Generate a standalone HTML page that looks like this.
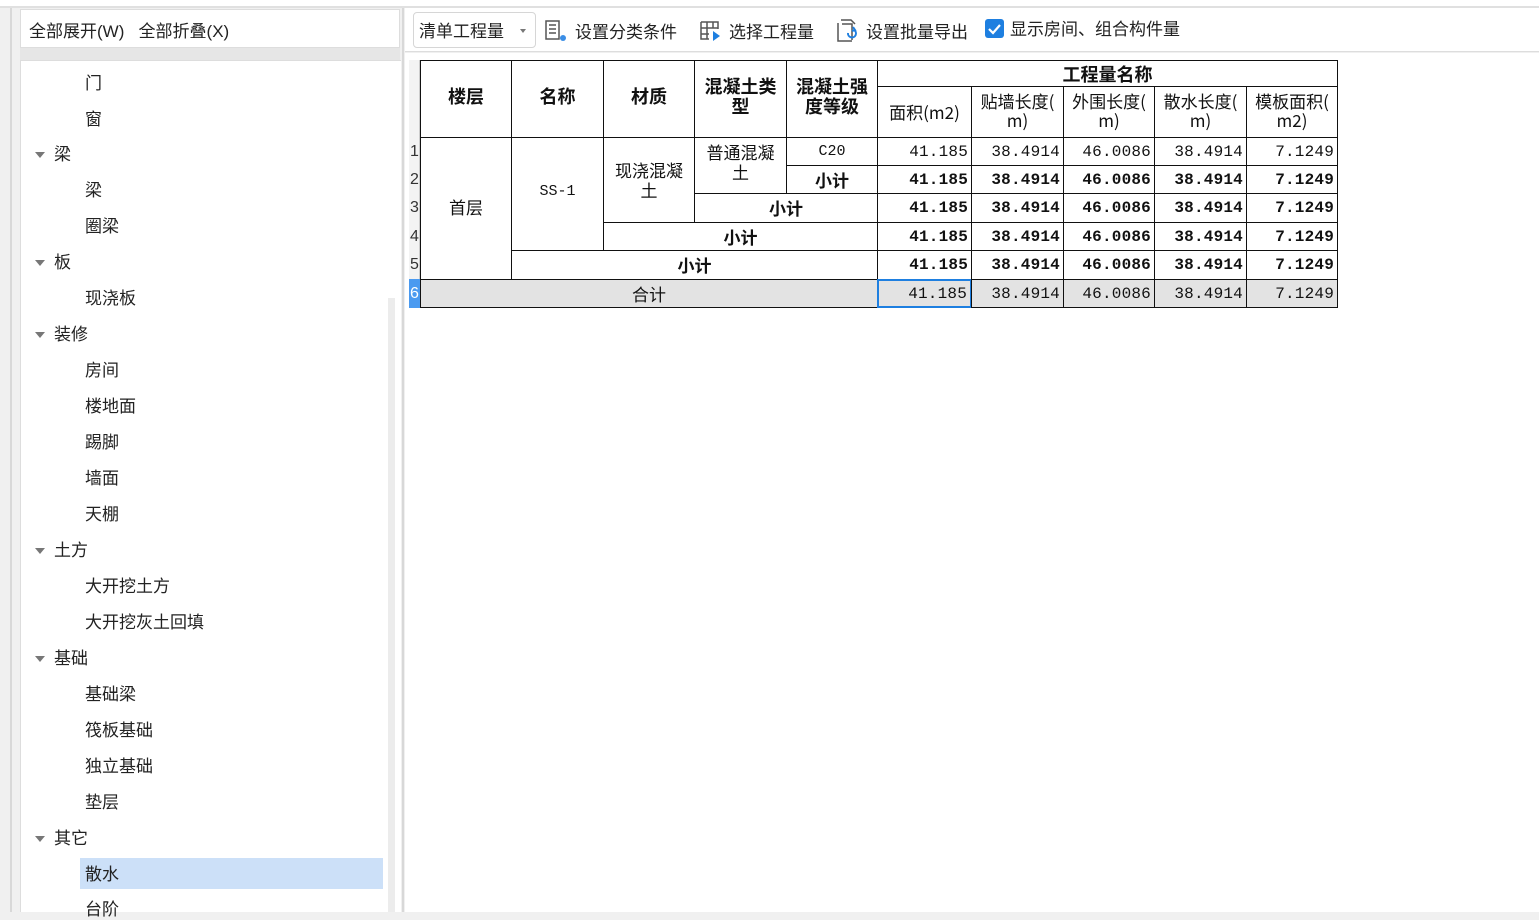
<!DOCTYPE html>
<html><head><meta charset="utf-8"><style>
*{margin:0;padding:0;box-sizing:border-box}
body{width:1539px;height:912px;background:#f0f0f0;position:relative;overflow:hidden;font-family:"Liberation Sans","Noto Sans CJK SC",sans-serif;color:#222}
.a{position:absolute}
.t{font-size:17px;position:absolute;line-height:20px;margin-top:2px}
.arr{position:absolute;width:0;height:0;border-left:5px solid transparent;border-right:5px solid transparent;border-top:6px solid #777;margin-top:2px}
.c{position:absolute;border:1px solid #111;display:flex;align-items:center;justify-content:center;text-align:center;font-family:"Noto Serif CJK SC","Liberation Serif",serif;font-size:16px;line-height:18px;background:#fff;color:#111}
.b{font-weight:bold;font-family:"Noto Sans CJK SC",sans-serif}
.h{font-family:"Noto Sans CJK SC","Liberation Sans",sans-serif}
.n{justify-content:flex-end;padding-right:3px;font-family:"Liberation Mono",monospace;font-size:16px;letter-spacing:0.2px}
.nb{font-weight:bold}
.g{background:#e3e3e3}
.rn{position:absolute;left:410px;width:10px;font-size:16px;color:#333;font-family:"Liberation Sans",sans-serif}
</style></head><body>
<div class="a" style="left:0;top:0;width:1539px;height:6px;background:#fff"></div>
<div class="a" style="left:0;top:6px;width:1539px;height:2px;background:#e0e0e0"></div>
<div class="a" style="left:10px;top:8px;width:2px;height:904px;background:#d8d8d8"></div>
<div class="a" style="left:20px;top:9px;width:380px;height:39px;background:#fff;border:1px solid #ddd"></div>
<div class="t" style="left:29px;top:20px">全部展开(W)&nbsp;&nbsp;&nbsp;全部折叠(X)</div>
<div class="a" style="left:20px;top:48px;width:380px;height:12px;background:#e6e6e6"></div>
<div class="a" style="left:20px;top:60px;width:381px;height:852px;background:#fff;border-left:1px solid #ddd;border-top:1px solid #ddd"></div>
<div class="a" style="left:388px;top:298px;width:7px;height:614px;background:#ececec"></div>
<div class="a" style="left:80px;top:858px;width:303px;height:31px;background:#cce0f8"></div>
<div class="t" style="left:85px;top:72px">门</div>
<div class="t" style="left:85px;top:108px">窗</div>
<div class="arr" style="left:35px;top:150px"></div><div class="t" style="left:54px;top:143px">梁</div>
<div class="t" style="left:85px;top:179px">梁</div>
<div class="t" style="left:85px;top:215px">圈梁</div>
<div class="arr" style="left:35px;top:258px"></div><div class="t" style="left:54px;top:251px">板</div>
<div class="t" style="left:85px;top:287px">现浇板</div>
<div class="arr" style="left:35px;top:330px"></div><div class="t" style="left:54px;top:323px">装修</div>
<div class="t" style="left:85px;top:359px">房间</div>
<div class="t" style="left:85px;top:395px">楼地面</div>
<div class="t" style="left:85px;top:431px">踢脚</div>
<div class="t" style="left:85px;top:467px">墙面</div>
<div class="t" style="left:85px;top:503px">天棚</div>
<div class="arr" style="left:35px;top:546px"></div><div class="t" style="left:54px;top:539px">土方</div>
<div class="t" style="left:85px;top:575px">大开挖土方</div>
<div class="t" style="left:85px;top:611px">大开挖灰土回填</div>
<div class="arr" style="left:35px;top:654px"></div><div class="t" style="left:54px;top:647px">基础</div>
<div class="t" style="left:85px;top:683px">基础梁</div>
<div class="t" style="left:85px;top:719px">筏板基础</div>
<div class="t" style="left:85px;top:755px">独立基础</div>
<div class="t" style="left:85px;top:791px">垫层</div>
<div class="arr" style="left:35px;top:834px"></div><div class="t" style="left:54px;top:827px">其它</div>
<div class="t" style="left:85px;top:863px">散水</div>
<div class="t" style="left:85px;top:898px">台阶</div>
<div class="a" style="left:402px;top:8px;width:2px;height:904px;background:#d8d8d8"></div>
<div class="a" style="left:405px;top:8px;width:1134px;height:44px;background:#fff;border-bottom:1px solid #ddd"></div>
<div class="a" style="left:405px;top:53px;width:1134px;height:859px;background:#fff"></div>
<div class="a" style="left:413px;top:12px;width:123px;height:36px;border:1px solid #d6d6d6;border-radius:4px;background:#fff"></div>
<div class="t" style="left:419px;top:20px">清单工程量</div>
<div class="arr" style="left:520px;top:27px;border-left-width:3px;border-right-width:3px;border-top-width:4px"></div>
<svg class="a" style="left:544px;top:19px" width="26" height="26" viewBox="0 0 26 26" fill="none" stroke="#555" stroke-width="1.5"><rect x="2" y="2" width="13" height="18"/><path d="M5 6h7M5 10h7M5 14h7"/><circle cx="19" cy="19" r="3" fill="#3b8ee6" stroke="none"/></svg>
<div class="t" style="left:575px;top:21px">设置分类条件</div>
<svg class="a" style="left:699px;top:19px" width="24" height="24" viewBox="0 0 24 24" fill="none" stroke="#555" stroke-width="1.5"><path d="M2 3h17v7M2 3v17h8M2 9h17M2 15h8M8 3v17M14 3v6"/><path d="M14 12l7 5-7 5z" fill="#1e7fe0" stroke="none"/></svg>
<div class="t" style="left:729px;top:21px">选择工程量</div>
<svg class="a" style="left:835px;top:18px" width="26" height="26" viewBox="0 0 26 26" fill="none" stroke="#555" stroke-width="1.5"><path d="M6 2h10l4 4M3 5v18h14"/><path d="M7 6h10v16"/><path d="M13 15a4 4 0 1 0 6-3" stroke="#1e7fe0" stroke-width="2"/><path d="M18 9l2 3-3 1" stroke="#1e7fe0" stroke-width="2"/></svg>
<div class="t" style="left:866px;top:21px">设置批量导出</div>
<div class="a" style="left:985px;top:19px;width:19px;height:19px;background:#1e7fe0;border-radius:3px"></div>
<svg class="a" style="left:985px;top:19px" width="19" height="19" viewBox="0 0 19 19"><path d="M4 10l4 4 7-8" stroke="#fff" stroke-width="2.2" fill="none"/></svg>
<div class="t" style="left:1010px;top:18px">显示房间、组合构件量</div>
<div class="a" style="left:409px;top:60px;width:11px;height:248px;background:#f3f3f3;border-right:1px solid #ccc"></div>
<div class="a" style="left:409px;top:279px;width:11px;height:29px;background:#4a9af0"></div>
<div class="rn" style="top:143px">1</div><div class="rn" style="top:171px">2</div><div class="rn" style="top:199px">3</div><div class="rn" style="top:228px">4</div><div class="rn" style="top:256px">5</div><div class="rn" style="top:285px;color:#fff">6</div>
<div class="c b" style="left:420px;top:60px;width:92px;height:78px;font-size:18px;padding-bottom:6px">楼层</div>
<div class="c b" style="left:511px;top:60px;width:93px;height:78px;font-size:18px;padding-bottom:6px">名称</div>
<div class="c b" style="left:603px;top:60px;width:92px;height:78px;font-size:18px;padding-bottom:6px">材质</div>
<div class="c b" style="left:694px;top:60px;width:93px;height:78px;font-size:18px;line-height:20px;padding-bottom:6px">混凝土类<br>型</div>
<div class="c b" style="left:786px;top:60px;width:92px;height:78px;font-size:18px;line-height:20px;padding-bottom:6px">混凝土强<br>度等级</div>
<div class="c b" style="left:877px;top:60px;width:461px;height:27px;font-size:18px">工程量名称</div>
<div class="c h" style="left:877px;top:86px;width:95px;height:52px;font-size:17px">面积(m2)</div>
<div class="c h" style="left:971px;top:86px;width:93px;height:52px;font-size:17px;line-height:19px;align-items:flex-start;padding-top:4px">贴墙长度(<br>m)</div>
<div class="c h" style="left:1063px;top:86px;width:92px;height:52px;font-size:17px;line-height:19px;align-items:flex-start;padding-top:4px">外围长度(<br>m)</div>
<div class="c h" style="left:1154px;top:86px;width:93px;height:52px;font-size:17px;line-height:19px;align-items:flex-start;padding-top:4px">散水长度(<br>m)</div>
<div class="c h" style="left:1246px;top:86px;width:92px;height:52px;font-size:17px;line-height:19px;align-items:flex-start;padding-top:4px">模板面积(<br>m2)</div>
<div class="c h" style="left:420px;top:137px;width:92px;height:143px;font-size:17px;padding-bottom:4px">首层</div>
<div class="c" style="left:511px;top:137px;width:93px;height:115px;font-family:'Liberation Mono',monospace;font-size:15px;padding-bottom:6px">SS-1</div>
<div class="c h" style="left:603px;top:137px;width:92px;height:86px;font-size:17px;line-height:20px">现浇混凝<br>土</div>
<div class="c h" style="left:694px;top:137px;width:93px;height:57px;font-size:17px;line-height:20px;align-items:flex-start;padding-top:4px">普通混凝<br>土</div>
<div class="c" style="left:786px;top:137px;width:92px;height:29px;font-family:'Liberation Mono',monospace;font-size:15px">C20</div>
<div class="c b" style="left:786px;top:165px;width:92px;height:29px;font-size:17px">小计</div>
<div class="c b" style="left:694px;top:193px;width:184px;height:30px;font-size:17px">小计</div>
<div class="c b" style="left:603px;top:222px;width:275px;height:29px;font-size:17px">小计</div>
<div class="c b" style="left:511px;top:250px;width:367px;height:30px;font-size:17px">小计</div>
<div class="c g h" style="left:420px;top:279px;width:458px;height:29px;font-size:17px">合计</div>
<div class="c n" style="left:877px;top:137px;width:95px;height:29px">41.185</div><div class="c n" style="left:971px;top:137px;width:93px;height:29px">38.4914</div><div class="c n" style="left:1063px;top:137px;width:92px;height:29px">46.0086</div><div class="c n" style="left:1154px;top:137px;width:93px;height:29px">38.4914</div><div class="c n" style="left:1246px;top:137px;width:92px;height:29px">7.1249</div>
<div class="c n nb" style="left:877px;top:165px;width:95px;height:29px">41.185</div><div class="c n nb" style="left:971px;top:165px;width:93px;height:29px">38.4914</div><div class="c n nb" style="left:1063px;top:165px;width:92px;height:29px">46.0086</div><div class="c n nb" style="left:1154px;top:165px;width:93px;height:29px">38.4914</div><div class="c n nb" style="left:1246px;top:165px;width:92px;height:29px">7.1249</div>
<div class="c n nb" style="left:877px;top:193px;width:95px;height:30px">41.185</div><div class="c n nb" style="left:971px;top:193px;width:93px;height:30px">38.4914</div><div class="c n nb" style="left:1063px;top:193px;width:92px;height:30px">46.0086</div><div class="c n nb" style="left:1154px;top:193px;width:93px;height:30px">38.4914</div><div class="c n nb" style="left:1246px;top:193px;width:92px;height:30px">7.1249</div>
<div class="c n nb" style="left:877px;top:222px;width:95px;height:29px">41.185</div><div class="c n nb" style="left:971px;top:222px;width:93px;height:29px">38.4914</div><div class="c n nb" style="left:1063px;top:222px;width:92px;height:29px">46.0086</div><div class="c n nb" style="left:1154px;top:222px;width:93px;height:29px">38.4914</div><div class="c n nb" style="left:1246px;top:222px;width:92px;height:29px">7.1249</div>
<div class="c n nb" style="left:877px;top:250px;width:95px;height:30px">41.185</div><div class="c n nb" style="left:971px;top:250px;width:93px;height:30px">38.4914</div><div class="c n nb" style="left:1063px;top:250px;width:92px;height:30px">46.0086</div><div class="c n nb" style="left:1154px;top:250px;width:93px;height:30px">38.4914</div><div class="c n nb" style="left:1246px;top:250px;width:92px;height:30px">7.1249</div>
<div class="c n g" style="left:877px;top:279px;width:95px;height:29px;border:2px solid #1e7fe0">41.185</div><div class="c n g" style="left:971px;top:279px;width:93px;height:29px">38.4914</div><div class="c n g" style="left:1063px;top:279px;width:92px;height:29px">46.0086</div><div class="c n g" style="left:1154px;top:279px;width:93px;height:29px">38.4914</div><div class="c n g" style="left:1246px;top:279px;width:92px;height:29px">7.1249</div>
</body></html>
